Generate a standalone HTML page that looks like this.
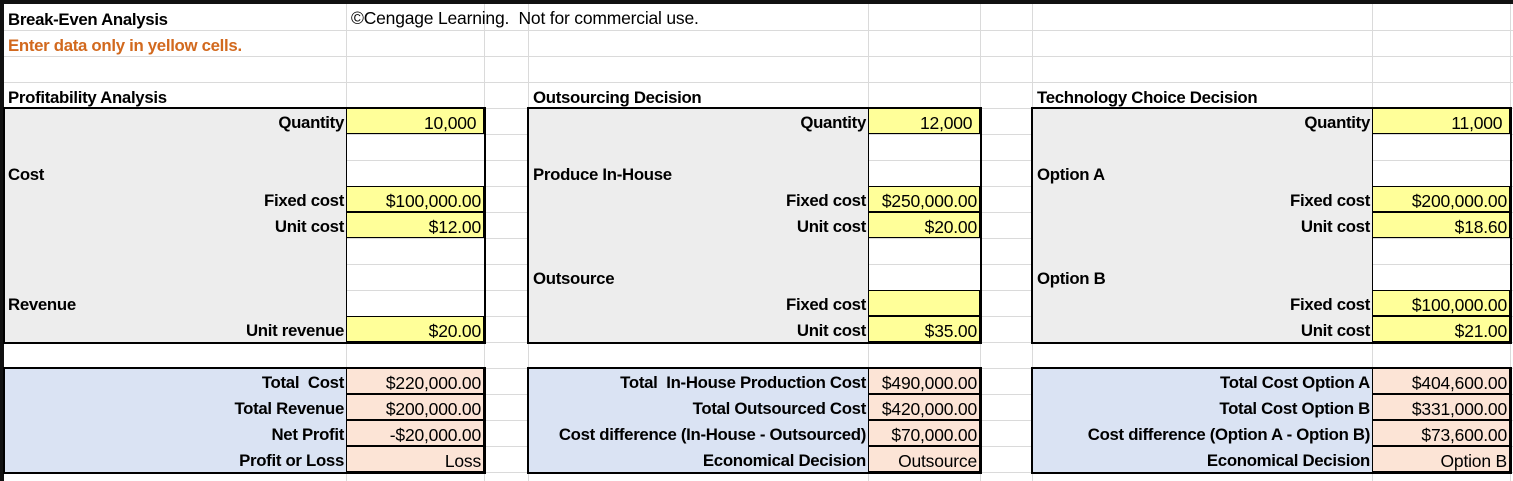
<!DOCTYPE html>
<html><head><meta charset="utf-8"><style>
*{margin:0;padding:0;box-sizing:border-box}
body{width:1513px;height:481px;position:relative;overflow:hidden;background:#fff;font-family:"Liberation Sans",Arial,sans-serif;font-size:17.5px;color:#000}
.g{position:absolute;background:#dadada}
.c{position:absolute;height:26px;line-height:29px;padding:0 2px;white-space:nowrap;overflow:visible;letter-spacing:-0.2px}
.b{font-weight:bold;font-size:16.8px;letter-spacing:-0.3px}
.r{text-align:right}
.bx{position:absolute;border:2px solid #000}
.y{background:#ffff99;border:1px solid #000}
.p{background:#fce4d6;border:1px solid #000}
.gr{position:absolute;background:#ededed}
.bl{position:absolute;background:#dae3f3}
</style></head><body>
<div class="g" style="left:0;top:30px;width:1513px;height:1px"></div>
<div class="g" style="left:0;top:56px;width:1513px;height:1px"></div>
<div class="g" style="left:0;top:82px;width:1513px;height:1px"></div>
<div class="g" style="left:0;top:108px;width:1513px;height:1px"></div>
<div class="g" style="left:0;top:134px;width:1513px;height:1px"></div>
<div class="g" style="left:0;top:160px;width:1513px;height:1px"></div>
<div class="g" style="left:0;top:186px;width:1513px;height:1px"></div>
<div class="g" style="left:0;top:212px;width:1513px;height:1px"></div>
<div class="g" style="left:0;top:238px;width:1513px;height:1px"></div>
<div class="g" style="left:0;top:264px;width:1513px;height:1px"></div>
<div class="g" style="left:0;top:290px;width:1513px;height:1px"></div>
<div class="g" style="left:0;top:316px;width:1513px;height:1px"></div>
<div class="g" style="left:0;top:342px;width:1513px;height:1px"></div>
<div class="g" style="left:0;top:368px;width:1513px;height:1px"></div>
<div class="g" style="left:0;top:394px;width:1513px;height:1px"></div>
<div class="g" style="left:0;top:420px;width:1513px;height:1px"></div>
<div class="g" style="left:0;top:446px;width:1513px;height:1px"></div>
<div class="g" style="left:0;top:472px;width:1513px;height:1px"></div>
<div class="g" style="left:346px;top:0;width:1px;height:481px"></div>
<div class="g" style="left:484px;top:0;width:1px;height:481px"></div>
<div class="g" style="left:528px;top:0;width:1px;height:481px"></div>
<div class="g" style="left:868px;top:0;width:1px;height:481px"></div>
<div class="g" style="left:980px;top:0;width:1px;height:481px"></div>
<div class="g" style="left:1032px;top:0;width:1px;height:481px"></div>
<div class="g" style="left:1372px;top:0;width:1px;height:481px"></div>
<div class="g" style="left:1510px;top:0;width:1px;height:481px"></div>
<div style="position:absolute;left:0;top:0;width:1513px;height:4px;background:#111"></div>
<div style="position:absolute;left:0;top:0;width:4px;height:481px;background:#111"></div>

<div class="c b" style="left:6px;top:5px">Break-Even Analysis</div>
<div class="c" style="left:349px;top:4px">©Cengage Learning.&nbsp; Not for commercial use.</div>
<div class="c b" style="left:6px;top:31px;color:#d2691e">Enter data only in yellow cells.</div>
<div class="c b" style="left:6px;top:83px">Profitability Analysis</div>
<div class="c b" style="left:531px;top:83px">Outsourcing Decision</div>
<div class="c b" style="left:1035px;top:83px">Technology Choice Decision</div>

<div class="gr" style="left:4px;top:108px;width:342px;height:234px"></div>
<div class="c b r" style="left:4px;top:108px;width:342px">Quantity</div>
<div class="c y r" style="left:346px;top:108px;width:138px">10,000&nbsp;</div>
<div class="c b" style="left:6px;top:160px">Cost</div>
<div class="c b r" style="left:4px;top:186px;width:342px">Fixed cost</div>
<div class="c y r" style="left:346px;top:186px;width:138px">$100,000.00</div>
<div class="c b r" style="left:4px;top:212px;width:342px">Unit cost</div>
<div class="c y r" style="left:346px;top:212px;width:138px">$12.00</div>
<div class="c b" style="left:6px;top:290px">Revenue</div>
<div class="c b r" style="left:4px;top:316px;width:342px">Unit revenue</div>
<div class="c y r" style="left:346px;top:316px;width:138px">$20.00</div>
<div style="position:absolute;left:346px;top:108px;width:1px;height:234px;background:#000"></div>
<div class="bx" style="left:3px;top:107px;width:483px;height:237px"></div>

<div class="bl" style="left:4px;top:368px;width:342px;height:104px"></div>
<div class="c b r" style="left:4px;top:368px;width:342px">Total&nbsp; Cost</div>
<div class="c p r" style="left:346px;top:368px;width:138px">$220,000.00</div>
<div class="c b r" style="left:4px;top:394px;width:342px">Total Revenue</div>
<div class="c p r" style="left:346px;top:394px;width:138px">$200,000.00</div>
<div class="c b r" style="left:4px;top:420px;width:342px">Net Profit</div>
<div class="c p r" style="left:346px;top:420px;width:138px">-$20,000.00</div>
<div class="c b r" style="left:4px;top:446px;width:342px">Profit or Loss</div>
<div class="c p r" style="left:346px;top:446px;width:138px">Loss</div>
<div class="bx" style="left:3px;top:367px;width:483px;height:107px"></div>

<div class="gr" style="left:528px;top:108px;width:340px;height:234px"></div>
<div class="c b r" style="left:528px;top:108px;width:340px">Quantity</div>
<div class="c y r" style="left:868px;top:108px;width:112px">12,000&nbsp;</div>
<div class="c b" style="left:531px;top:160px">Produce In-House</div>
<div class="c b r" style="left:528px;top:186px;width:340px">Fixed cost</div>
<div class="c y r" style="left:868px;top:186px;width:112px">$250,000.00</div>
<div class="c b r" style="left:528px;top:212px;width:340px">Unit cost</div>
<div class="c y r" style="left:868px;top:212px;width:112px">$20.00</div>
<div class="c b" style="left:531px;top:264px">Outsource</div>
<div class="c b r" style="left:528px;top:290px;width:340px">Fixed cost</div>
<div class="c y r" style="left:868px;top:290px;width:112px"></div>
<div class="c b r" style="left:528px;top:316px;width:340px">Unit cost</div>
<div class="c y r" style="left:868px;top:316px;width:112px">$35.00</div>
<div style="position:absolute;left:868px;top:108px;width:1px;height:234px;background:#000"></div>
<div class="bx" style="left:527px;top:107px;width:455px;height:237px"></div>

<div class="bl" style="left:528px;top:368px;width:340px;height:104px"></div>
<div class="c b r" style="left:528px;top:368px;width:340px">Total&nbsp; In-House Production Cost</div>
<div class="c p r" style="left:868px;top:368px;width:112px">$490,000.00</div>
<div class="c b r" style="left:528px;top:394px;width:340px">Total Outsourced Cost</div>
<div class="c p r" style="left:868px;top:394px;width:112px">$420,000.00</div>
<div class="c b r" style="left:528px;top:420px;width:340px">Cost difference (In-House - Outsourced)</div>
<div class="c p r" style="left:868px;top:420px;width:112px">$70,000.00</div>
<div class="c b r" style="left:528px;top:446px;width:340px">Economical Decision</div>
<div class="c p r" style="left:868px;top:446px;width:112px">Outsource</div>
<div class="bx" style="left:527px;top:367px;width:455px;height:107px"></div>

<div class="gr" style="left:1032px;top:108px;width:340px;height:234px"></div>
<div class="c b r" style="left:1032px;top:108px;width:340px">Quantity</div>
<div class="c y r" style="left:1372px;top:108px;width:138px">11,000&nbsp;</div>
<div class="c b" style="left:1035px;top:160px">Option A</div>
<div class="c b r" style="left:1032px;top:186px;width:340px">Fixed cost</div>
<div class="c y r" style="left:1372px;top:186px;width:138px">$200,000.00</div>
<div class="c b r" style="left:1032px;top:212px;width:340px">Unit cost</div>
<div class="c y r" style="left:1372px;top:212px;width:138px">$18.60</div>
<div class="c b" style="left:1035px;top:264px">Option B</div>
<div class="c b r" style="left:1032px;top:290px;width:340px">Fixed cost</div>
<div class="c y r" style="left:1372px;top:290px;width:138px">$100,000.00</div>
<div class="c b r" style="left:1032px;top:316px;width:340px">Unit cost</div>
<div class="c y r" style="left:1372px;top:316px;width:138px">$21.00</div>
<div style="position:absolute;left:1372px;top:108px;width:1px;height:234px;background:#000"></div>
<div class="bx" style="left:1031px;top:107px;width:481px;height:237px"></div>

<div class="bl" style="left:1032px;top:368px;width:340px;height:104px"></div>
<div class="c b r" style="left:1032px;top:368px;width:340px">Total Cost Option A</div>
<div class="c p r" style="left:1372px;top:368px;width:138px">$404,600.00</div>
<div class="c b r" style="left:1032px;top:394px;width:340px">Total Cost Option B</div>
<div class="c p r" style="left:1372px;top:394px;width:138px">$331,000.00</div>
<div class="c b r" style="left:1032px;top:420px;width:340px">Cost difference (Option A - Option B)</div>
<div class="c p r" style="left:1372px;top:420px;width:138px">$73,600.00</div>
<div class="c b r" style="left:1032px;top:446px;width:340px">Economical Decision</div>
<div class="c p r" style="left:1372px;top:446px;width:138px">Option B</div>
<div class="bx" style="left:1031px;top:367px;width:481px;height:107px"></div>
</body></html>
